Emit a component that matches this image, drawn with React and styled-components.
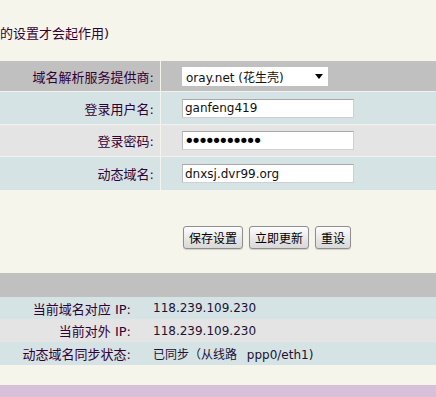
import React from 'react';
import styled, { createGlobalStyle } from 'styled-components';

const GlobalStyle = createGlobalStyle`
  body {
    margin: 0;
    background: #f5f5eb;
    font-family: "DejaVu Sans", "Noto Sans CJK SC", sans-serif;
    font-size: 12px;
    color: #330033;
  }
`;

const Page = styled.div`
  width: 436px;
  height: 397px;
  overflow: hidden;
  background: #f5f5eb;
`;

const Note = styled.div`
  height: 61px;
  padding-top: 26px;
  box-sizing: border-box;
  font-size: 13px;
  line-height: 16px;
  color: #330033;
  white-space: nowrap;
`;

/* form rows */
const FormRow = styled.div`
  display: grid;
  grid-template-columns: 161px 1fr;
  height: ${p => p.$h || 31}px;
  background: ${p => p.$bg};
  border-bottom: ${p => (p.$last ? 'none' : '1px solid #f2f2ec')};
`;

const Label = styled.div`
  display: flex;
  align-items: center;
  justify-content: flex-end;
  padding-right: 6px;
  border-right: 1px solid #f4f4ee;
  font-size: 13px;
  color: #330033;
  white-space: nowrap;
`;

const Field = styled.div`
  display: flex;
  align-items: center;
  padding-left: 21px;
`;

const TextBox = styled.input`
  width: 172px;
  height: 19px;
  box-sizing: border-box;
  border: 1px solid #d0d0d0;
  border-top-color: #a8a8a8;
  border-left-color: #bcbcbc;
  background: #fff;
  padding: 0 2px;
  font-family: "DejaVu Sans", "Noto Sans CJK SC", sans-serif;
  font-size: 12px;
  color: #111;
  outline: none;

  &[type='password'] {
    font-size: 18px;
    letter-spacing: -3.8px;
    padding-left: 1px;
    color: #000;
  }
`;

const Select = styled.div`
  display: flex;
  align-items: center;
  justify-content: space-between;
  width: 146px;
  height: 19px;
  box-sizing: border-box;
  background: #fff;
  padding: 0 5px 0 4px;
  font-size: 12px;
  color: #111;
  white-space: nowrap;
`;

/* buttons */
const ButtonBar = styled.div`
  display: flex;
  gap: 6px;
  height: 83px;
  box-sizing: border-box;
  padding: 36px 0 0 183px;
`;

const Button = styled.button`
  height: 23px;
  padding: 0 5px;
  border: 1px solid #8e8e8e;
  border-radius: 3px;
  background: linear-gradient(#fdfdfd, #e6e6e6 60%, #d8d8d8);
  box-shadow: 0 1px 1px rgba(0, 0, 0, 0.15);
  font-family: "Noto Sans CJK SC", sans-serif;
  font-size: 12px;
  color: #000;
  cursor: pointer;
`;

/* status block */
const Bar = styled.div`
  height: 24px;
  background: #c0c0c0;
`;

const InfoRow = styled.div`
  display: grid;
  grid-template-columns: 131px 1fr;
  column-gap: 22px;
  align-items: center;
  height: ${p => p.$h}px;
  background: ${p => p.$bg};
  white-space: nowrap;
`;

const InfoLabel = styled.div`
  text-align: right;
  font-size: 13px;
  color: #330033;
`;

const InfoValue = styled.div`
  color: #221133;
  font-size: 12px;
  word-spacing: 6px;
`;

const Spacer = styled.div`
  height: 20px;
`;

const Footer = styled.div`
  height: 12px;
  background: #d9c0d9;
`;

const Arrow = () => (
  <svg width="8" height="5" viewBox="0 0 8 5">
    <path d="M0 0h8L4 5z" fill="#000" />
  </svg>
);

export default function App() {
  return (
    <Page>
      <GlobalStyle />
      <Note>的设置才会起作用)</Note>

      <FormRow $bg="#c0c0c0" $h={30}>
        <Label>域名解析服务提供商:</Label>
        <Field>
          <Select>
            <span>oray.net (花生壳)</span>
            <Arrow />
          </Select>
        </Field>
      </FormRow>
      <FormRow $bg="#d5e3e4" $h={32}>
        <Label>登录用户名:</Label>
        <Field>
          <TextBox type="text" defaultValue="ganfeng419" />
        </Field>
      </FormRow>
      <FormRow $bg="#e4e4e4" $h={31}>
        <Label>登录密码:</Label>
        <Field>
          <TextBox type="password" defaultValue="ganfeng4190" />
        </Field>
      </FormRow>
      <FormRow $bg="#d5e3e4" $h={33} $last>
        <Label>动态域名:</Label>
        <Field>
          <TextBox type="text" defaultValue="dnxsj.dvr99.org" />
        </Field>
      </FormRow>

      <ButtonBar>
        <Button>保存设置</Button>
        <Button>立即更新</Button>
        <Button>重设</Button>
      </ButtonBar>

      <Bar />
      <InfoRow $bg="#d5e3e4" $h={22}>
        <InfoLabel>当前域名对应 IP:</InfoLabel>
        <InfoValue>118.239.109.230</InfoValue>
      </InfoRow>
      <InfoRow $bg="#e4e4e4" $h={23}>
        <InfoLabel>当前对外 IP:</InfoLabel>
        <InfoValue>118.239.109.230</InfoValue>
      </InfoRow>
      <InfoRow $bg="#d5e3e4" $h={23}>
        <InfoLabel>动态域名同步状态:</InfoLabel>
        <InfoValue>已同步（从线路 ppp0/eth1)</InfoValue>
      </InfoRow>
      <Spacer />
      <Footer />
    </Page>
  );
}
